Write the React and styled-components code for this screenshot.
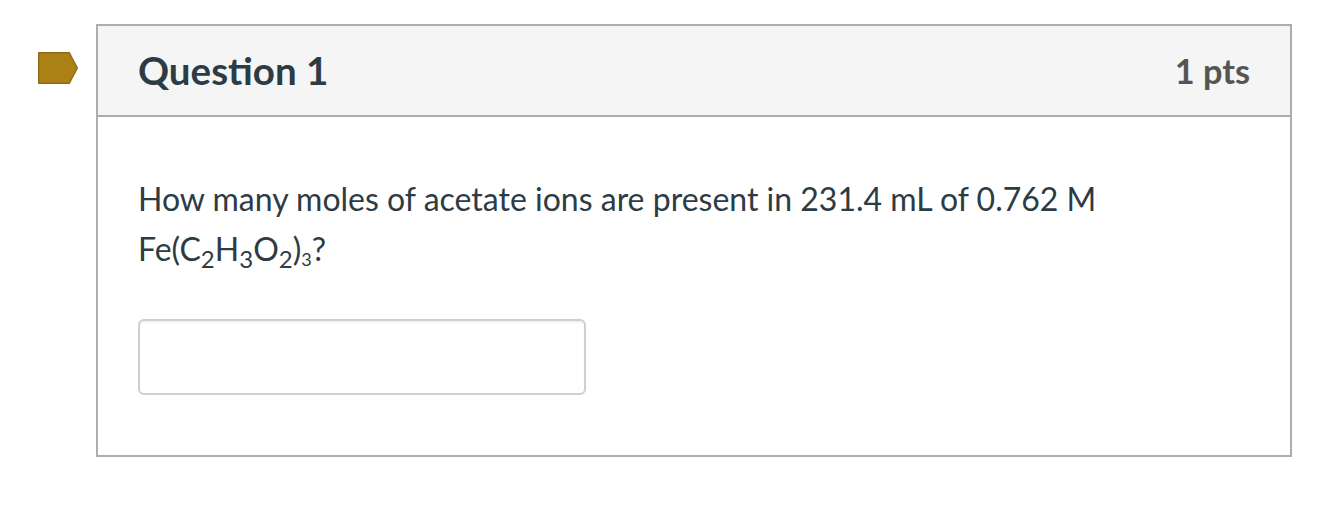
import React from "react";
import styled, { createGlobalStyle } from "styled-components";

const Global = createGlobalStyle`
  html, body { margin: 0; padding: 0; background: #fff; }
  body { font-family: Lato, "Liberation Sans", sans-serif; color: #2d3b45; }
`;
const Page = styled.div`
  display: flex;
  align-items: flex-start;
  padding: 24px 52px 0 38px;
  height: 514px;
  box-sizing: border-box;
`;
const Flag = styled.svg`
  width: 40px;
  height: 32px;
  margin: 28px 18px 0 0;
  flex: none;
`;
const Card = styled.section`
  flex: 1;
  height: 433px;
  box-sizing: border-box;
  border: 2px solid #adadad;
  display: flex;
  flex-direction: column;
`;
const Header = styled.header`
  height: 91px;
  flex: none;
  box-sizing: border-box;
  background: #f5f5f5;
  border-bottom: 2px solid #adadad;
  display: flex;
  align-items: center;
  justify-content: space-between;
  padding: 0 40px 1px;
`;
const Title = styled.h2`
  margin: 0;
  font-size: 38.5px;
  font-weight: 700;
  color: #2d3b45;
`;
const Points = styled.span`
  font-size: 34.3px;
  font-weight: 700;
  color: #555;
`;
const Body = styled.div`
  padding: 57px 40px 0;
`;
const Text = styled.p`
  margin: 0;
  font-size: 32px;
  line-height: 50px;
  color: #2d3b45;
  sub { font-size: 24px; line-height: 0; vertical-align: -7px; }
  small { font-size: 18px; vertical-align: -5px; line-height: 0; }
`;
const Answer = styled.input`
  display: block;
  width: 448px;
  height: 76px;
  box-sizing: border-box;
  margin-top: 45px;
  border: 2px solid #cfcfcf;
  border-radius: 6px;
  background: #fff;
  box-shadow: inset 0 2px 2px rgba(0, 0, 0, 0.05);
`;
export default function App() {
  return (
    <Page>
      <Global />
      <Flag viewBox="0 0 40 32"><path d="M.7.7h30.6l8 15.3-8 15.3H.7z" fill="#ab8116" stroke="#8f6d14" strokeWidth="1.4" /></Flag>
      <Card>
        <Header><Title>Question 1</Title><Points>1 pts</Points></Header>
        <Body>
          <Text>How many moles of acetate ions are present in 231.4 mL of 0.762 M<br />Fe(C<sub>2</sub>H<sub>3</sub>O<sub>2</sub>)<small>3</small>?</Text>
          <Answer />
        </Body>
      </Card>
    </Page>
  );
}
